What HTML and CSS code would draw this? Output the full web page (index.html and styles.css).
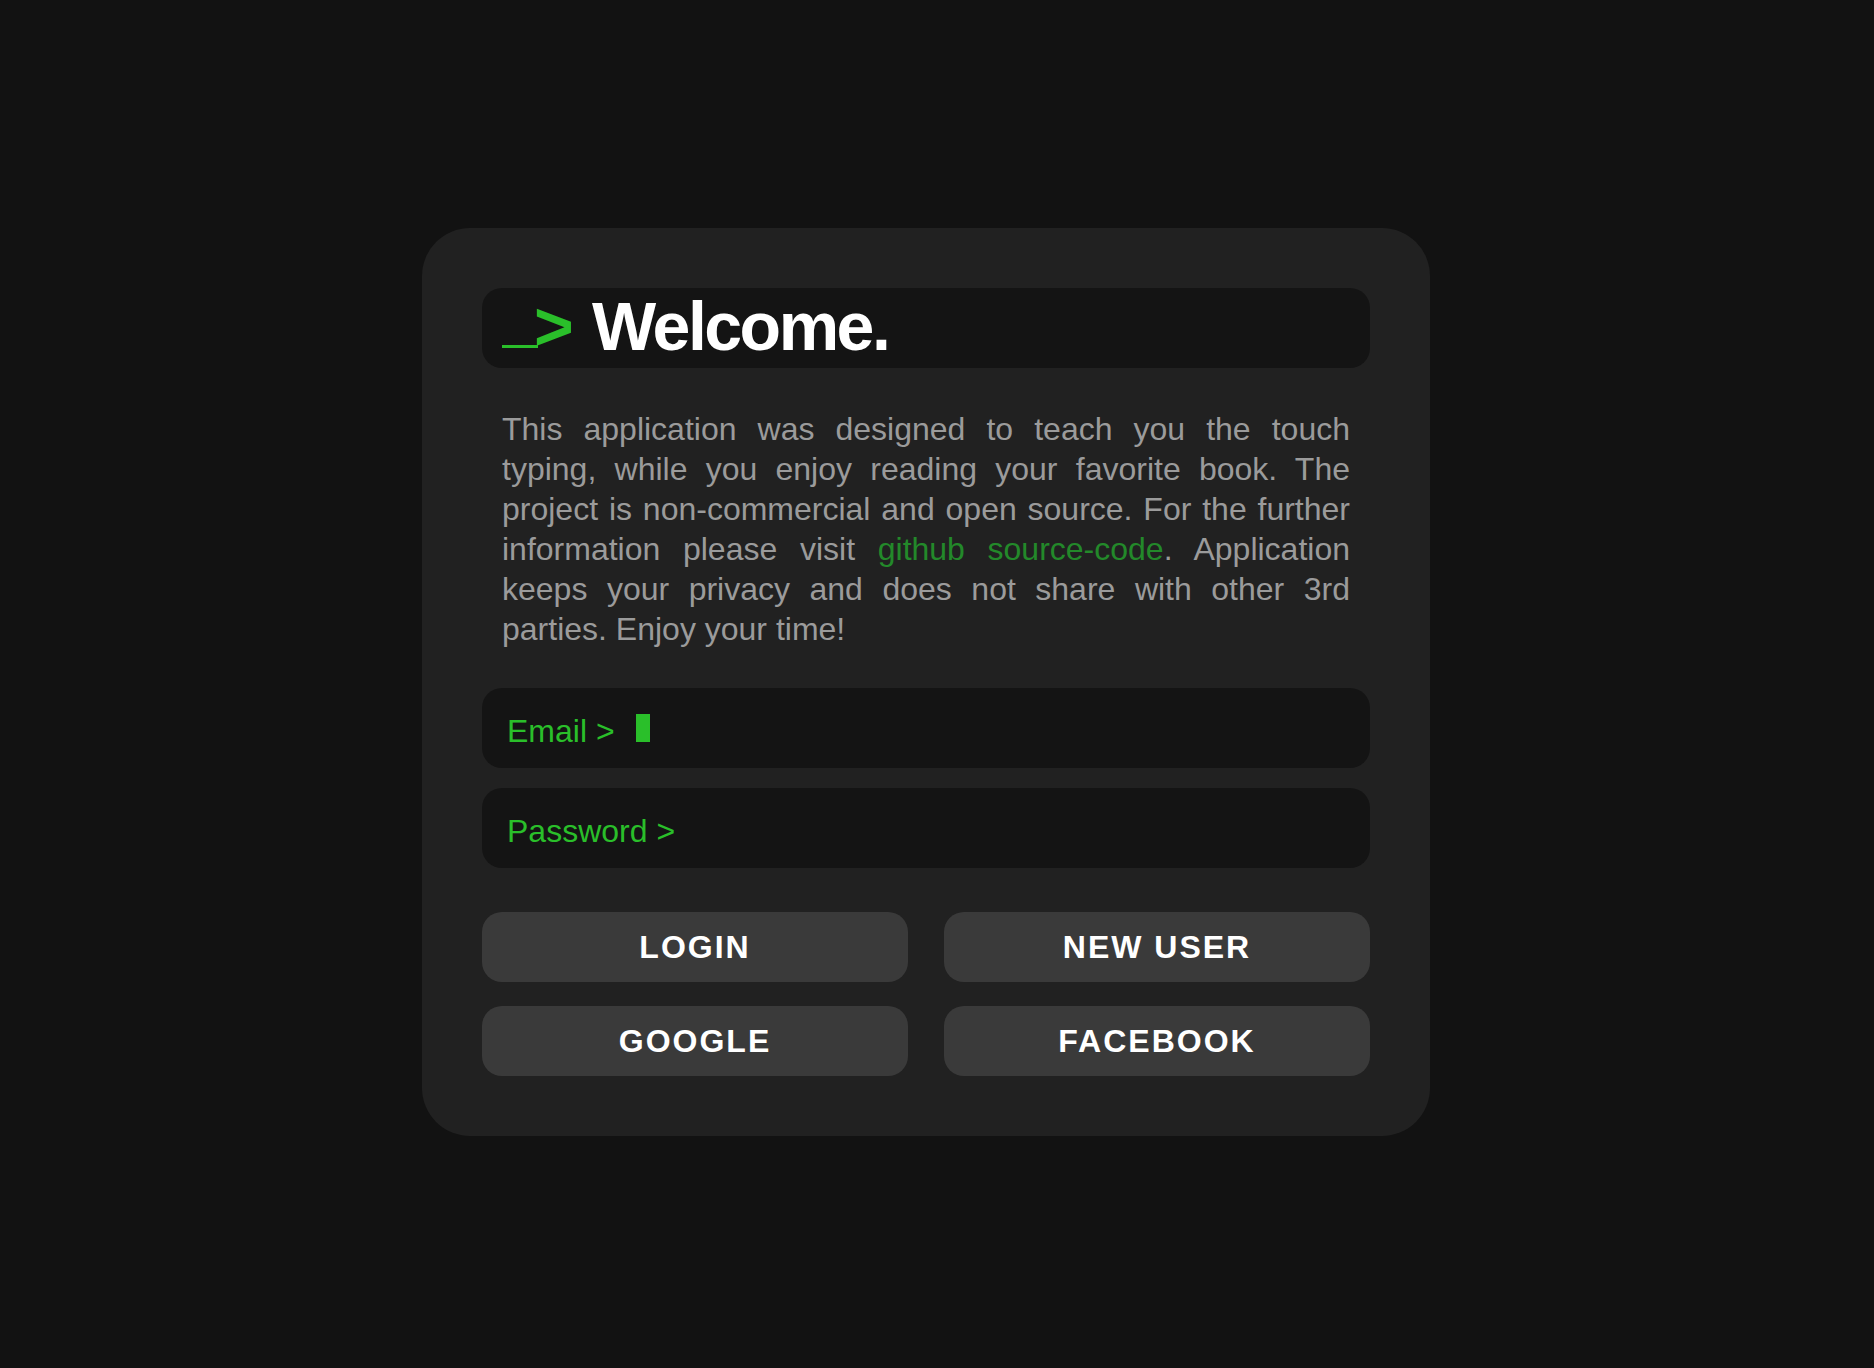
FILE: index.html
```html
<!DOCTYPE html>
<html lang="en">
<head>
<meta charset="utf-8">
<title>Welcome</title>
<link rel="stylesheet" href="styles.css">
</head>
<body>
<main class="page">
  <section class="card">
    <div class="welcome">
      <h1 class="title"><span class="prompt"><span class="prompt-bar"></span><span class="prompt-chevron">&gt;</span></span> Welcome.</h1>
    </div>
    <p class="intro">This application was designed to teach you the touch typing, while you enjoy reading your favorite book. The project is non-commercial and open source. For the further information please visit <a class="link" href="#">github source-code</a>. Application keeps your privacy and does not share with other 3rd parties. Enjoy your time!</p>
    <div class="fields">
      <div class="field"><span class="field-label">Email &gt;</span><span class="caret"></span></div>
      <div class="field"><span class="field-label">Password &gt;</span></div>
    </div>
    <div class="actions">
      <button class="btn">LOGIN</button>
      <button class="btn">NEW USER</button>
      <button class="btn">GOOGLE</button>
      <button class="btn">FACEBOOK</button>
    </div>
  </section>
</main>
</body>
</html>
```

FILE: styles.css
```css
html, body {
  margin: 0;
  padding: 0;
  background: #121212;
}

body {
  font-family: "Liberation Sans", Arial, sans-serif;
}

.page {
  min-height: 100vh;
  box-sizing: border-box;
  display: flex;
  align-items: center;
  justify-content: center;
  padding: 0 22px 4px 0;
}

.card {
  width: 1008px;
  box-sizing: border-box;
  padding: 60px;
  background: #212121;
  border-radius: 48px;
}

.welcome {
  height: 80px;
  box-sizing: border-box;
  background: #141414;
  border-radius: 20px;
  padding: 2px 20px 0;
}

.title {
  margin: 0;
  font-size: 68px;
  font-weight: 700;
  line-height: 72px;
  letter-spacing: -2.5px;
  color: #ffffff;
  white-space: nowrap;
}

.prompt {
  color: #2abf2a;
  letter-spacing: 0;
}

.prompt-bar {
  display: inline-block;
  width: 36px;
  height: 3px;
  background: #2abf2a;
  margin-bottom: 2px;
  margin-right: -4px;
}

.prompt-chevron {
  margin-right: 2px;
}

.intro {
  margin: 41px 0 39px;
  padding: 0 20px;
  font-size: 32px;
  line-height: 40px;
  color: #9b9b9b;
  text-align: justify;
}

.link {
  color: #23892a;
  text-decoration: none;
}

.fields {
  display: flex;
  flex-direction: column;
  gap: 20px;
}

.field {
  height: 80px;
  box-sizing: border-box;
  padding: 25px 25px 0;
  background: #141414;
  border-radius: 20px;
  font-size: 32px;
  line-height: 37px;
  color: #2abf2a;
  white-space: nowrap;
}

.caret {
  display: inline-block;
  width: 14px;
  height: 28px;
  margin-left: 21px;
  background: #2abf2a;
}

.actions {
  margin-top: 44px;
  display: grid;
  grid-template-columns: 1fr 1fr;
  gap: 24px 36px;
}

.btn {
  height: 70px;
  border: none;
  border-radius: 20px;
  background: #3a3a3a;
  color: #ffffff;
  font-family: "Liberation Sans", Arial, sans-serif;
  font-size: 32px;
  font-weight: 700;
  letter-spacing: 2px;
  padding: 0;
}
```
